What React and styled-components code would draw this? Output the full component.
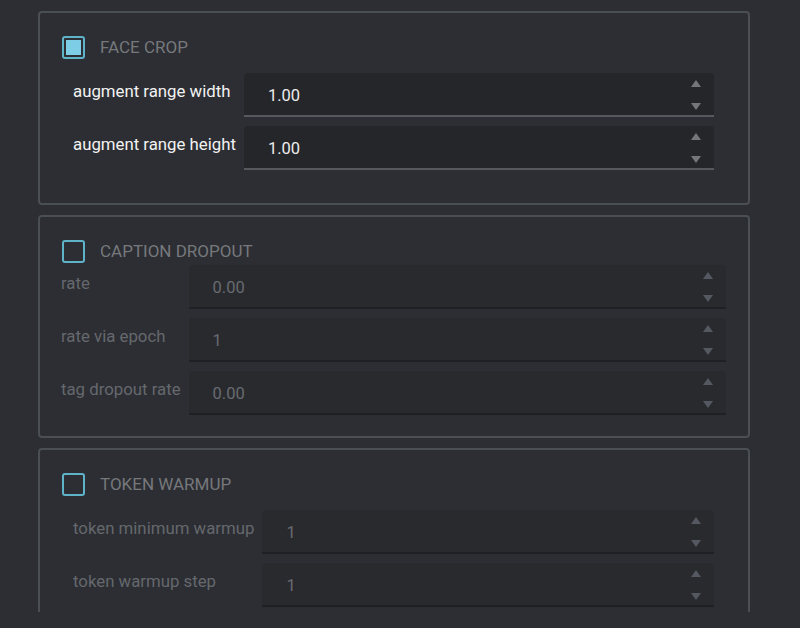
import React from "react";
import styled, { createGlobalStyle } from "styled-components";

const Global = createGlobalStyle`
  html, body { margin: 0; padding: 0; background: #2c2e33; }
  body { font-family: Roboto, "Noto Sans", sans-serif; }
  * { box-sizing: border-box; }
`;

const Viewport = styled.div`
  height: 612px;
  overflow: hidden;
  padding: 11px 50px 0 38px;
`;

const Stack = styled.div`
  display: flex;
  flex-direction: column;
  gap: 10px;
  width: 712px;
`;

const Panel = styled.section`
  border: 2px solid #4a4e55;
  border-radius: 4px;
  background: #2c2e33;
  padding: ${(p) => (p.$inset ? "22px 34px 33px 22px" : "22px 22px 21px 22px")};
`;

const Header = styled.label`
  display: flex;
  align-items: center;
  gap: 15px;
  height: 24px;
`;

const Box = styled.span`
  width: 23px;
  height: 23px;
  border: 2px solid #5fb3c8;
  border-radius: 3px;
  padding: 2px;
  display: flex;
  & > span {
    flex: 1;
    background: ${(p) => (p.$checked ? "#7dcde6" : "transparent")};
  }
`;

const Title = styled.span`
  color: #76787c;
  font-size: 17px;
`;

const Grid = styled.div`
  display: grid;
  grid-template-columns: auto 1fr;
  column-gap: 8px;
  row-gap: 9px;
  margin-top: ${(p) => (p.$inset ? "14px" : "2px")};
  padding-left: ${(p) => (p.$inset ? "11px" : "0")};
  margin-left: ${(p) => (p.$inset ? "0" : "-1px")};
`;

const Label = styled.div`
  color: ${(p) => (p.$disabled ? "#65686d" : "#f2f2f2")};
  font-size: 16.8px;
  line-height: 24px;
  padding-top: 6px;
  white-space: nowrap;
`;

const Field = styled.div`
  height: 44px;
  background: ${(p) => (p.$disabled ? "#292a2e" : "#25262a")};
  border-radius: 4px 4px 0 0;
  border-bottom: 2px solid ${(p) => (p.$disabled ? "#1f2023" : "#55585e")};
  display: flex;
  align-items: center;
  padding: 0 12px 0 24px;
`;

const Value = styled.span`
  flex: 1;
  color: ${(p) => (p.$disabled ? "#686b71" : "#ededed")};
  font-size: 16.5px;
  padding-top: 2px;
`;

const Spinner = styled.div`
  display: flex;
  flex-direction: column;
  justify-content: space-between;
  height: 32px;
  margin-top: 2px;
  color: ${(p) => (p.$disabled ? "#545860" : "#74767a")};
`;

const Arrow = ({ down }) => (
  <svg width="12" height="9" viewBox="0 0 12 9">
    <path d={down ? "M1 1 L11 1 L6 8 Z" : "M1 8 L11 8 L6 1 Z"} fill="currentColor" />
  </svg>
);

const NumberField = ({ value, disabled }) => (
  <Field $disabled={disabled}>
    <Value $disabled={disabled}>{value}</Value>
    <Spinner $disabled={disabled}>
      <Arrow />
      <Arrow down />
    </Spinner>
  </Field>
);

const sections = [
  {
    title: "FACE CROP",
    checked: true,
    inset: true,
    rows: [
      ["augment range width", "1.00"],
      ["augment range height", "1.00"],
    ],
  },
  {
    title: "CAPTION DROPOUT",
    checked: false,
    inset: false,
    rows: [
      ["rate", "0.00"],
      ["rate via epoch", "1"],
      ["tag dropout rate", "0.00"],
    ],
  },
  {
    title: "TOKEN WARMUP",
    checked: false,
    inset: true,
    rows: [
      ["token minimum warmup", "1"],
      ["token warmup step", "1"],
    ],
  },
];

export default function App() {
  return (
    <>
      <Global />
      <Viewport>
        <Stack>
          {sections.map((s) => (
            <Panel key={s.title} $inset={s.inset}>
              <Header>
                <Box $checked={s.checked}>
                  <span />
                </Box>
                <Title>{s.title}</Title>
              </Header>
              <Grid $inset={s.inset}>
                {s.rows.map(([l, v]) => (
                  <React.Fragment key={l}>
                    <Label $disabled={!s.checked}>{l}</Label>
                    <NumberField value={v} disabled={!s.checked} />
                  </React.Fragment>
                ))}
              </Grid>
            </Panel>
          ))}
        </Stack>
      </Viewport>
    </>
  );
}
